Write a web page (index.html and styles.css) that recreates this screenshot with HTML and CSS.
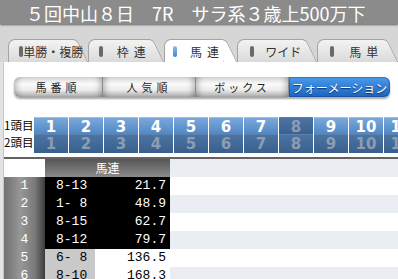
FILE: index.html
```html
<!DOCTYPE html>
<html lang="ja">
  <head>
    <meta charset="UTF-8" />
    <meta name="viewport" content="width=device-width, initial-scale=1.0" />
    <title>馬連オッズ</title>
    <link rel="stylesheet" href="styles.css">
  </head>
  <body>
    <div class="race-title">５回中山８日　7R　サラ系３歳上500万下</div>

    <div class="tabs">
      <div class="tab"><i></i><span>単勝・複勝</span></div>
      <div class="tab"><i></i><span class="wide">枠連</span></div>
      <div class="tab active"><i></i><span class="wide">馬連</span></div>
      <div class="tab"><i></i><span>ワイド</span></div>
      <div class="tab"><i></i><span class="wide">馬単</span></div>
    </div>

    <div class="panel">
      <div class="sort">
        <span class="sort-btn s1">馬番順</span>
        <span class="sort-btn s2">人気順</span>
        <span class="sort-btn s3">ボックス</span>
        <span class="sort-btn s4 on">フォーメーション</span>
      </div>

      <div class="picker">
        <div class="pick-row">
          <span class="pick-label">1頭目</span>
          <div class="nums">
            <span>1</span><span>2</span><span>3</span><span>4</span><span>5</span><span>6</span>
            <span>7</span><span class="off">8</span><span>9</span><span>10</span><span>11</span>
          </div>
        </div>
        <div class="pick-row">
          <span class="pick-label">2頭目</span>
          <div class="nums">
            <span class="off">1</span><span class="off">2</span><span class="off">3</span><span class="off">4</span>
            <span class="off">5</span><span class="off">6</span><span class="off">7</span><span class="off">8</span>
            <span class="off">9</span><span class="off">10</span><span class="off">11</span>
          </div>
        </div>
      </div>

      <table class="odds">
        <tr class="head">
          <td class="no"></td>
          <th colspan="2">馬連</th>
          <td class="fill"></td>
        </tr>
        <tr class="hit">
          <td class="no">1</td><td class="combo">8-13</td><td class="val">21.7</td><td class="fill"></td>
        </tr>
        <tr class="hit">
          <td class="no">2</td><td class="combo">1- 8</td><td class="val">48.9</td><td class="fill"></td>
        </tr>
        <tr class="hit">
          <td class="no">3</td><td class="combo">8-15</td><td class="val">62.7</td><td class="fill"></td>
        </tr>
        <tr class="hit">
          <td class="no">4</td><td class="combo">8-12</td><td class="val">79.7</td><td class="fill"></td>
        </tr>
        <tr>
          <td class="no">5</td><td class="combo">6- 8</td><td class="val">136.5</td><td class="fill"></td>
        </tr>
        <tr>
          <td class="no">6</td><td class="combo">8-10</td><td class="val">168.3</td><td class="fill"></td>
        </tr>
      </table>
    </div>
  </body>
</html>
```

FILE: styles.css
```css
/* Pantalla de odds de 馬連: cabecera, pestañas, orden, selector de caballos y tabla */
body {
  margin: 0;
  background: #e3e3e3;
  font-family: "Noto Sans CJK JP", sans-serif;
  overflow: hidden;
}
.race-title {
  position: relative;
  z-index: 2;
  height: 24px;
  line-height: 27px;
  padding-left: 26px;
  background: #8b8b8b;
  color: #fff;
  font-size: 18px;
  white-space: nowrap;
  box-shadow: 0 1px 2px rgba(0, 0, 0, 0.55);
}

/* Pestañas con el borde derecho inclinado (el ::after hace la diagonal) */
.tabs {
  display: flex;
  height: 23px;
  padding: 15px 0 0 8px;
  background: #d6d6d6;
  white-space: nowrap;
  overflow: hidden;
}
.tab {
  position: relative;
  display: flex;
  align-items: center;
  height: 22px;
  padding-left: 10px;
  margin-right: 14px;
  border: 1px solid #a3a3a3;
  border-bottom: none;
  border-right: none;
  border-top-left-radius: 7px;
  background: linear-gradient(#f3f3f3, #dadada);
  font-size: 12px;
  color: #333;
}
.tab::after {
  content: "";
  position: absolute;
  top: -1px;
  right: -3px;
  width: 12px;
  height: 23px;
  border-top: 1px solid #a3a3a3;
  border-right: 1px solid #a3a3a3;
  border-top-right-radius: 5px;
  background: linear-gradient(#f3f3f3, #dadada);
  transform: skewX(26deg);
  transform-origin: top;
}
.tab:nth-child(1) { width: 61px; }
.tab:nth-child(2) { width: 56px; }
.tab:nth-child(3) { width: 55px; padding-left: 8px; }
.tab:nth-child(4) { width: 59px; padding-left: 12px; }
.tab:nth-child(5) { width: 59px; padding-left: 12px; }
.tab.active,
.tab.active::after {
  background: #fff;
}
.tab.active {
  z-index: 1;
}
.tab i {
  width: 4px;
  height: 11px;
  border-radius: 2px;
  background: #6a6a6a;
}
.tab.active i {
  background: linear-gradient(#8ec0f2, #3b85d6);
}
.tab span {
  position: relative;
  z-index: 1;
  flex: 1;
  margin-right: -9px;
  text-align: center;
}
.tab span.wide {
  letter-spacing: 5px;
  text-indent: 5px;
}

.panel {
  height: calc(100vh - 62px);
  margin-left: 3px;
  padding-top: 15px;
  box-sizing: border-box;
  border-left: 1px solid #c6c6c6;
  background: #fff;
  overflow: hidden;
}

/* Botones de orden */
.sort {
  display: flex;
  width: 376px;
  height: 20px;
  margin-left: 10px;
  border-radius: 6px;
  box-shadow: 0 2px 2px rgba(0, 0, 0, 0.35);
}
.sort-btn {
  display: flex;
  align-items: center;
  justify-content: center;
  background: linear-gradient(#d4d4d4 0%, #fbfbfb 35%, #ececec 65%, #a9a9a9 100%);
  box-shadow: inset 7px 0 6px -5px rgba(0, 0, 0, 0.28), inset -7px 0 6px -5px rgba(0, 0, 0, 0.28);
  border-right: 1px solid #8c8c8c;
  font-size: 11px;
  letter-spacing: 4px;
  color: #222;
}
.s1 { width: 88px; border-radius: 6px 0 0 6px; }
.s2 { width: 92px; }
.s3 { width: 92px; letter-spacing: 3px; }
.s4 { width: 101px; }
.sort-btn.on {
  border-right: none;
  border-radius: 0 6px 6px 0;
  background: linear-gradient(#4f9ae9 0%, #2f7fda 50%, #1c63bd 100%);
  box-shadow: inset 0 0 0 1px rgba(20, 60, 120, 0.4);
  color: #fff;
  letter-spacing: 0;
  font-size: 12px;
  text-shadow: 0 1px 1px rgba(0, 0, 0, 0.6);
}

/* Selector 1頭目 / 2頭目 */
.picker {
  display: grid;
  gap: 1px;
  margin-top: 20px;
}
.pick-row {
  display: flex;
  height: 16px;
}
.pick-label {
  width: 30px;
  font-size: 11.5px;
  line-height: 16px;
  color: #000;
  white-space: nowrap;
}
.nums {
  display: grid;
  grid-template-columns: repeat(11, 34px);
  gap: 1px;
}
.nums span {
  display: flex;
  align-items: center;
  justify-content: center;
  border-top: 1px solid #9cc1ea;
  background: linear-gradient(#79a8db, #4d83c1);
  font-family: "DejaVu Sans", sans-serif;
  font-weight: bold;
  font-size: 15px;
  color: #fff;
}
.nums span.off {
  border-top-color: #5b80aa;
  background: linear-gradient(#4c74a2, #385f8d);
  color: #8c9db3;
}

/* Tabla de odds */
.odds {
  width: 100%;
  margin-top: 7px;
  border-top: 2px solid #626262;
  border-collapse: collapse;
  font-family: "Liberation Mono", monospace;
  font-size: 13px;
}
.odds td,
.odds th {
  height: 18px;
  padding: 0;
  line-height: 18px;
  white-space: pre;
}
.odds .no {
  width: 41px;
  text-align: center;
  color: #fff;
  background: linear-gradient(to right, #707070, #979797 40%, #7a7a7a 75%, #3c3c3c);
}
.odds .head .no {
  background: #fff;
}
.odds th {
  width: 125px;
  background: linear-gradient(#565656, #8a8a8a);
  color: #fff;
  font-family: "Noto Sans CJK JP", sans-serif;
  font-weight: normal;
  font-size: 12px;
}
.odds .combo {
  width: 39px;
  padding-left: 11px;
  background: #c9c9c9;
}
.odds .val {
  width: 71px;
  padding-right: 4px;
  text-align: right;
}
.odds .hit .combo,
.odds .hit .val {
  background: #000;
  color: #fff;
}
.odds tr:nth-child(odd) .fill {
  background: #eaeef2;
}
```
